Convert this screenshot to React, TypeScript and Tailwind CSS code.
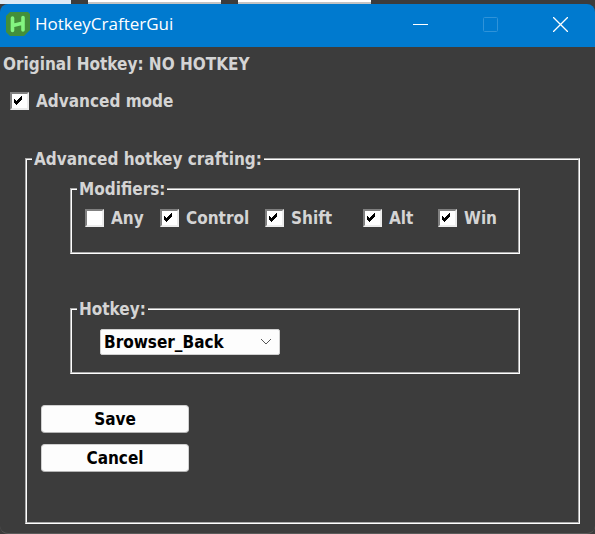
import type { ReactNode } from "react";

const MODIFIERS = [
  { name: "Any", on: false },
  { name: "Control", on: true },
  { name: "Shift", on: true },
  { name: "Alt", on: true },
  { name: "Win", on: true },
];

function CheckBox({ label, checked }: { label: string; checked: boolean }) {
  return (
    <label className="flex items-center gap-[7px]">
      <span className="relative h-[18px] w-[19px] shrink-0">
        <input
          type="checkbox"
          defaultChecked={checked}
          className="peer block h-full w-full appearance-none border-2 border-t-[#808080] border-r-[#ececec] border-b-[#ececec] border-l-[#808080] bg-white"
        />
        <svg
          viewBox="0 0 19 18"
          shapeRendering="crispEdges"
          className="pointer-events-none invisible absolute inset-0 h-full w-full peer-checked:visible"
        >
          <path
            d="M4 7h1v4h-1z M5 8h1v4h-1z M6 9h1v4h-1z M7 8h1v4h-1z M8 7h1v4h-1z M9 6h1v4h-1z M10 5h1v4h-1z M11 4h1v4h-1z"
            fill="#000"
          />
        </svg>
      </span>
      <span>{label}</span>
    </label>
  );
}

function GroupBox({ title, className, children }: { title: string; className: string; children: ReactNode }) {
  return (
    <fieldset className={`min-w-0 border-2 border-white [border-style:groove] ${className}`}>
      <legend className="ml-[5px] px-[2px]">{title}</legend>
      {children}
    </fieldset>
  );
}

function TitleBar() {
  return (
    <header className="flex h-[43px] items-center rounded-t-lg bg-[#007acf] pl-[6px] text-white">
      <svg viewBox="0 0 24 24" className="mb-[3px] h-6 w-6">
        <path d="M4 0h18l2 2v16l-6 6H4l-4-4V4z" fill="#438f3a" />
        <path d="M6.500 6v12.500M17 5.500v12.500M7 13.500l10-2.500" stroke="#83f580" strokeWidth="3.600" strokeLinecap="round" fill="none" />
      </svg>
      <h1 className="mb-1 ml-[5px] grow font-['Open_Sans',sans-serif] text-[17px] leading-6 font-normal">
        HotkeyCrafterGui
      </h1>
      <button aria-label="Minimize" className="flex h-full w-[70px] items-center justify-center">
        <svg viewBox="0 0 15 15" className="mb-[2px] h-[15px] w-[15px]">
          <path d="M0 7.500h15" stroke="#fff" />
        </svg>
      </button>
      <button aria-label="Maximize" disabled className="flex h-full w-[70px] items-center justify-center">
        <svg viewBox="0 0 15 15" className="mb-[2px] h-[15px] w-[15px]">
          <rect x=".5" y=".5" width="14" height="14" rx="1" fill="none" stroke="#2f93d9" />
        </svg>
      </button>
      <button aria-label="Close" className="flex h-full w-[70px] items-center justify-center">
        <svg viewBox="0 0 15 15" className="mb-[2px] h-[15px] w-[15px]">
          <path d="M0 0l15 15M15 0L0 15" stroke="#fff" strokeWidth="1.300" />
        </svg>
      </button>
    </header>
  );
}

const BUTTON =
  "h-7 w-[148px] rounded border border-[#d0d0d0] border-b-[#b4b4b4] bg-[#fdfdfd] text-center text-black";

export default function App() {
  return (
    <div className="flex min-h-screen flex-col bg-[#3c3c3c] font-['DejaVu_Sans_Condensed','DejaVu_Sans',sans-serif] text-[17px] leading-5 font-bold text-[#d4d4d4]">
      <div className="flex h-1 gap-[17px]">
        <div className="w-[71px] bg-[#dce9f5]" />
        <div className="w-[133px] border-b-2 border-[#c4c4c4] bg-white" />
        <div className="w-[133px] border-b-2 border-[#c4c4c4] bg-white" />
      </div>
      <TitleBar />
      <main className="flex grow flex-col rounded-b-lg border-b border-[#5a5a5a] pr-[15px] pb-[9px]">
        <p className="mt-[7px] ml-[3px]">Original Hotkey: NO HOTKEY</p>
        <div className="mt-[17px] mb-[38px] ml-[10px] flex">
          <CheckBox label="Advanced mode" checked />
        </div>
        <GroupBox title="Advanced hotkey crafting:" className="ml-[25px] grow pr-[58px] pb-[50px]">
          <GroupBox title="Modifiers:" className="mt-[10px] ml-[43px] pb-[24px]">
            <div className="mt-[9px] ml-[13px] grid grid-cols-[75px_105px_98px_75px_1fr]">
              {MODIFIERS.map((m) => (
                <CheckBox key={m.name} label={m.name} checked={m.on} />
              ))}
            </div>
          </GroupBox>
          <GroupBox title="Hotkey:" className="mt-[45px] ml-[43px] pb-[17px]">
            <div className="relative mt-[10px] ml-[28px] h-[26px] w-[180px]">
              <select
                aria-label="Hotkey"
                className="block h-full w-full appearance-none rounded-xs border border-[#d0d0d0] bg-[#fdfdfd] pl-[3px] text-black"
              >
                <option>Browser_Back</option>
              </select>
              <svg
                viewBox="0 0 12 8"
                className="pointer-events-none absolute top-[9px] right-[8px] h-2 w-3"
                fill="none"
                stroke="#555"
              >
                <path d="M1 1l5 5 5-5" />
              </svg>
            </div>
          </GroupBox>
          <div className="mt-[31px] ml-[14px] flex flex-col items-start gap-[11px]">
            <button className={BUTTON}>Save</button>
            <button className={BUTTON}>Cancel</button>
          </div>
        </GroupBox>
      </main>
    </div>
  );
}
